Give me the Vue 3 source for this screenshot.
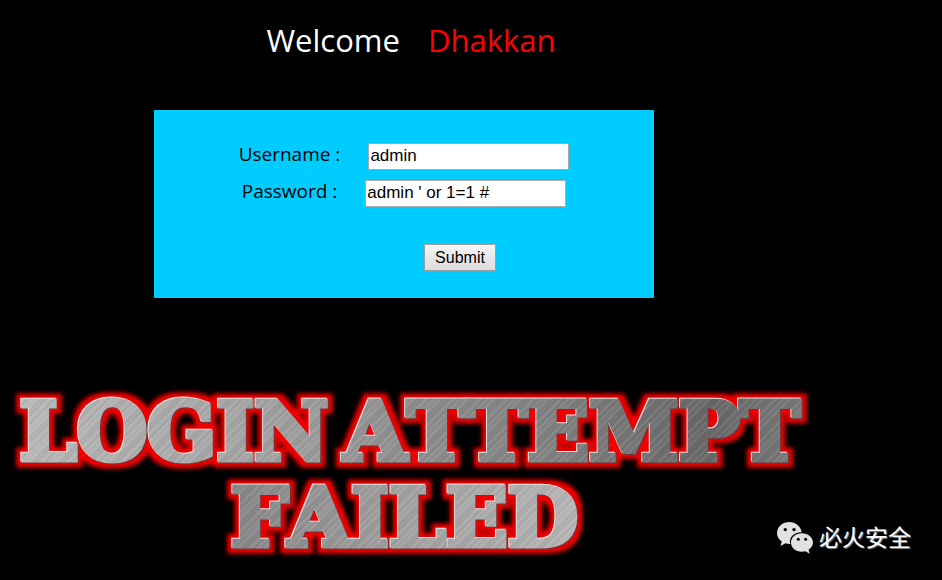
<script setup>
import { ref } from 'vue'

const username = ref('admin')
const password = ref("admin ' or 1=1 #")

const words = [
  { text: 'LOGIN', x: 20, y: 80 },
  { text: 'ATTEMPT', x: 344, y: 80 },
  { text: 'FAILED', x: 231, y: 166 },
]
</script>

<template>
  <main class="page">
    <h1 class="title">
      <span>Welcome</span>
      <span class="name">Dhakkan</span>
    </h1>

    <form class="panel" @submit.prevent>
      <div class="row">
        <label for="username">Username :</label>
        <input id="username" v-model="username" type="text" />
      </div>
      <div class="row">
        <label for="password">Password :</label>
        <input id="password" v-model="password" type="text" />
      </div>
      <div class="actions">
        <button type="submit">Submit</button>
      </div>
    </form>

    <svg class="banner" viewBox="0 0 828 200" role="img" aria-label="Login attempt failed">
      <defs>
        <linearGradient id="upper" gradientUnits="userSpaceOnUse" x1="0" y1="60" x2="828" y2="60">
          <stop offset="0" stop-color="#bababa" />
          <stop offset="0.28" stop-color="#a6a6a6" />
          <stop offset="0.48" stop-color="#909090" />
          <stop offset="0.66" stop-color="#828282" />
          <stop offset="0.86" stop-color="#686868" />
          <stop offset="1" stop-color="#808080" />
        </linearGradient>
        <linearGradient id="lower" gradientUnits="userSpaceOnUse" x1="231" y1="0" x2="580" y2="0">
          <stop offset="0" stop-color="#868686" />
          <stop offset="0.5" stop-color="#a2a2a2" />
          <stop offset="1" stop-color="#b6b6b6" />
        </linearGradient>
        <pattern id="brush" width="19" height="60" patternUnits="userSpaceOnUse" patternTransform="rotate(45)">
          <path d="M2 0V60M11 0V60M16 0V60" stroke="#fff" stroke-opacity=".14" />
          <path d="M5 0V60M8 0V60M14 0V60" stroke="#000" stroke-opacity=".09" />
        </pattern>
        <pattern id="steel" width="828" height="200" patternUnits="userSpaceOnUse">
          <rect width="828" height="95" fill="url(#upper)" />
          <rect y="95" width="828" height="105" fill="url(#lower)" />
          <rect width="828" height="200" fill="url(#brush)" />
        </pattern>
        <filter
          id="emboss"
          filterUnits="userSpaceOnUse"
          x="0"
          y="0"
          width="828"
          height="200"
          color-interpolation-filters="sRGB"
        >
          <feMorphology in="SourceAlpha" operator="dilate" radius="5" result="fat" />
          <feGaussianBlur in="fat" stdDeviation="2" result="soft" />
          <feFlood flood-color="#f00000" />
          <feComposite in2="soft" operator="in" result="glow" />
          <feOffset in="SourceAlpha" dx="-1" dy="-1" result="up" />
          <feFlood flood-color="#f2e6e6" />
          <feComposite in2="up" operator="in" result="light" />
          <feOffset in="SourceAlpha" dx="1" dy="1" result="down" />
          <feFlood flood-color="#7a3030" />
          <feComposite in2="down" operator="in" result="shade" />
          <feMerge>
            <feMergeNode in="glow" />
            <feMergeNode in="shade" />
            <feMergeNode in="light" />
            <feMergeNode in="SourceGraphic" />
          </feMerge>
        </filter>
      </defs>
      <g class="lettering" filter="url(#emboss)">
        <text v-for="w in words" :key="w.text" :x="w.x" :y="w.y">{{ w.text }}</text>
      </g>
    </svg>

    <div class="watermark">
      <svg viewBox="0 0 36 32" aria-hidden="true">
        <path
          fill="#e2e2e2"
          d="M12.500 0C5.500 0 0 4.900 0 11c0 3.500 1.800 6.500 4.700 8.500L3.500 24l5-2.700c1.300.4 2.600.6 4 .6h.9C11.500 16 16 10.200 24.700 10.200C23.700 4.300 18.700 0 12.500 0Z"
        />
        <path
          fill="#e2e2e2"
          d="M24.800 11.200C18.600 11.200 14 15.300 14 20.500s4.600 9.300 10.800 9.300c1.300 0 2.500-.2 3.600-.5l4.300 2.400-1.100-4C34.300 26 36 23.400 36 20.500c0-5.200-5-9.300-11.200-9.300Z"
        />
        <circle cx="8.300" cy="7.600" r="1.700" />
        <circle cx="17" cy="7.600" r="1.700" />
        <circle cx="21.300" cy="17.300" r="1.500" />
        <circle cx="28.600" cy="17.300" r="1.500" />
      </svg>
      <span>必火安全</span>
    </div>
  </main>
</template>

<style>
body {
  margin: 0;
  background: #000;
}
</style>

<style scoped>
.page {
  position: relative;
  box-sizing: border-box;
  min-height: 100vh;
  padding-top: 19px;
  color: #fff;
  font-family: 'Open Sans', 'Noto Sans', sans-serif;
}

.title {
  display: flex;
  justify-content: center;
  gap: 28px;
  max-width: 822px;
  margin: 0 0 49px;
  font-size: 31px;
  font-weight: 400;
  line-height: 42px;
}

.name {
  color: #f00;
}

.panel {
  display: flex;
  flex-direction: column;
  gap: 10px;
  box-sizing: border-box;
  max-width: 500px;
  margin-left: 154px;
  padding: 33px 0 27px;
  background: #0cf;
  color: #000;
}

.row {
  display: flex;
  justify-content: center;
  align-items: flex-start;
  gap: 28px;
}

label {
  font-size: 19px;
  line-height: 22px;
}

input {
  box-sizing: border-box;
  width: 201px;
  height: 27px;
  padding: 0 1px 2px;
  border: 1px solid #a9a9a9;
  background: #fff;
  color: #000;
  font: 17px 'Liberation Sans', Arial, sans-serif;
}

.actions {
  display: flex;
  justify-content: center;
  padding: 27px 0 0 112px;
}

button {
  width: 72px;
  height: 27px;
  padding: 0;
  border: 1px solid #a0a0a0;
  background: linear-gradient(#f6f6f6, #dcdcdc);
  color: #000;
  font: 16px 'Liberation Sans', Arial, sans-serif;
}

.banner {
  display: block;
  width: 100%;
  max-width: 828px;
  margin-top: 82px;
}

.lettering {
  font-family: 'DejaVu Serif', serif;
  font-size: 81px;
  font-weight: 700;
  font-kerning: none;
  fill: url(#steel);
  stroke: url(#steel);
  stroke-width: 5px;
}

.watermark {
  position: absolute;
  right: 31px;
  bottom: 26px;
  display: flex;
  align-items: flex-start;
  gap: 6px;
  color: #fff;
  font: 23px/28px 'Noto Sans CJK SC', sans-serif;
  text-shadow: 1px 1px 1px #888;
}

.watermark svg {
  width: 36px;
  height: 32px;
}
</style>
